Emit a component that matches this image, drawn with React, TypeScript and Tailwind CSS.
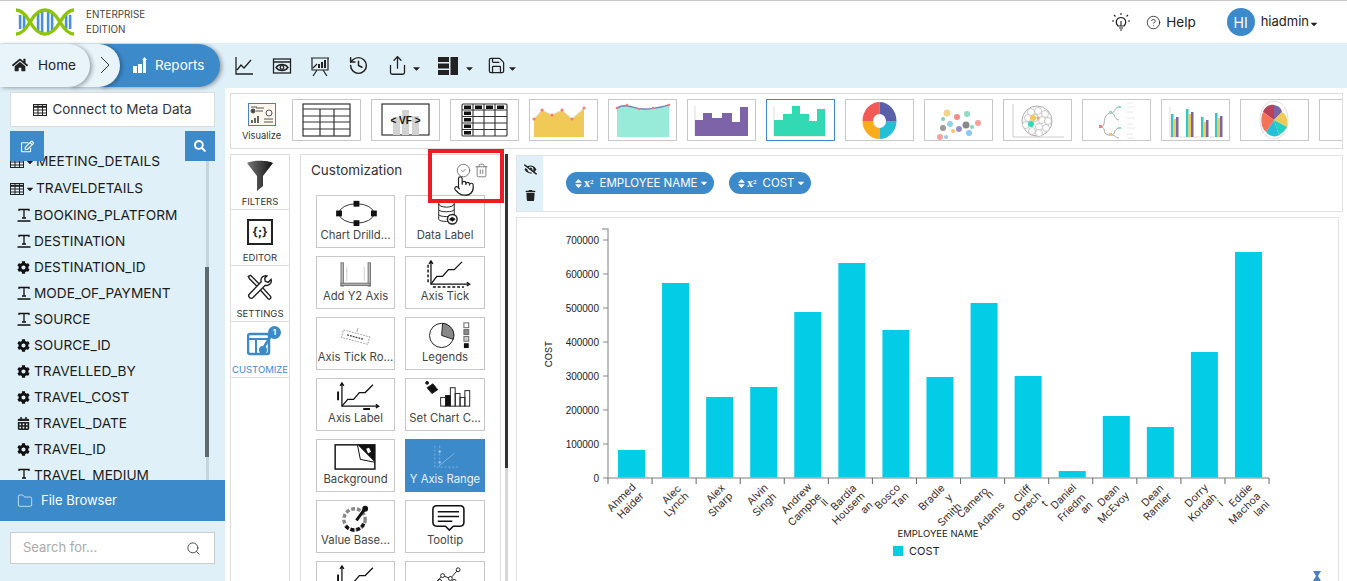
import { CircleCheck, Trash2, Search, Folder, History, Share, Save, CircleHelp, Pointer } from "lucide-react";
import { FaCog, FaCaretDown, FaSort, FaTrash, FaEyeSlash, FaCalendarAlt, FaHome, FaSearch, FaRegEdit } from "react-icons/fa";
import type { ReactNode } from "react";

const font = { fontFamily: "Inter, 'Open Sans', sans-serif" };

const fields: [string, string][] = [
  ["BOOKING_PLATFORM", "t"],
  ["DESTINATION", "t"],
  ["DESTINATION_ID", "c"],
  ["MODE_OF_PAYMENT", "t"],
  ["SOURCE", "t"],
  ["SOURCE_ID", "c"],
  ["TRAVELLED_BY", "c"],
  ["TRAVEL_COST", "c"],
  ["TRAVEL_DATE", "d"],
  ["TRAVEL_ID", "c"],
  ["TRAVEL_MEDIUM", "t"],
];

// bar tops in page pixels, the chart svg uses page coordinates
const bars = [450, 283, 397, 387, 312, 263, 330, 377, 303, 376, 471, 416, 427, 352, 252];

const labels: [string, number, number][] = [
  ["Ahmed", 622, 498], ["Haider", 631, 506],
  ["Alec", 672, 495], ["Lynch", 677, 505],
  ["Alex", 716, 494], ["Sharp", 721, 505],
  ["Alvin", 758, 495], ["Singh", 765, 505],
  ["Andrew", 797, 499], ["Campbe", 805, 510], ["ll", 825, 503],
  ["Bardia", 844, 498], ["Housem", 849, 509], ["an", 867, 508],
  ["Bosco", 888, 497], ["Tan", 901, 501],
  ["Bradle", 932, 498], ["y", 949, 498], ["Smith", 950, 515],
  ["Camero", 973, 503], ["n", 990, 495], ["Adams", 991, 516],
  ["Cliff", 1023, 494], ["Obrech", 1027, 507], ["t", 1045, 504],
  ["Daniel", 1064, 497], ["Friedm", 1072, 508], ["an", 1087, 508],
  ["Dean", 1109, 496], ["McEvoy", 1114, 508],
  ["Dean", 1153, 496], ["Ramler", 1158, 507],
  ["Dorry", 1197, 496], ["Kordah", 1203, 508], ["i", 1221, 504],
  ["Eddie", 1241, 496], ["Machoa", 1245, 509], ["lani", 1262, 509],
];

function Logo() {
  const rungs = [20, 24, 38, 42, 48, 52, 66, 70];
  return (
    <svg width="60" height="28" viewBox="15 7 60 28" fill="none">
      {rungs.map(x => {
        const h = x < 30 || x > 60 ? 7 : 10;
        return <rect key={x} x={x - 1.2} y={21 - h} width="2.6" height={h * 2} fill="#4a90e2" />;
      })}
      <path d="M16 9C22 9 26 14 30 21C34 28 39 33 45 33C51 33 56 28 60 21C64 14 68 9 74 9" stroke="#8cc408" strokeWidth="3.5" />
      <path d="M16 33C22 33 26 28 30 21C34 14 39 9 45 9C51 9 56 14 60 21C64 28 68 33 74 33" stroke="#8cc408" strokeWidth="3.5" />
    </svg>
  );
}

function Caret({ className = "" }: { className?: string }) {
  return <FaCaretDown size={11} className={className} />;
}

function Toolbar() {
  return (
    <div className="flex items-center ml-[14px] text-[#222]">
      <svg width="20" height="20" viewBox="0 0 20 20" fill="none" stroke="#222" strokeWidth="1.3" className="mr-[18px]">
        <path d="M2 1v17h17M3 14l4-5 3 3 7-8" />
      </svg>
      <svg width="20" height="20" viewBox="0 0 20 20" fill="none" stroke="#222" strokeWidth="1.3" className="mr-[18px]">
        <rect x="1.5" y="3" width="17" height="14" />
        <path d="M1.5 6h17M4 11.5c3-4 9-4 12 0c-3 4-9 4-12 0z" />
        <circle cx="10" cy="11.5" r="1.8" />
      </svg>
      <svg width="20" height="20" viewBox="0 0 20 20" fill="none" stroke="#222" strokeWidth="1.2" className="mr-[18px]">
        <path d="M2 2h16v12H2zM1 2h18M7 14l-4 6M13 14l4 6M3 12l4-4" />
        <path d="M9 12V8M12 12V6M15 12V4" strokeWidth="2" />
      </svg>
      <History size={21} strokeWidth={1.7} className="mr-[18px]" />
      <Share size={21} strokeWidth={1.5} />
      <Caret className="ml-[3px] mr-[16px] mt-[5px]" />
      <svg width="20" height="18" viewBox="0 0 20 18" fill="#222">
        <rect x="0" y="0" width="11" height="5" />
        <rect x="0" y="6.5" width="11" height="5" />
        <rect x="0" y="13" width="11" height="5" />
        <rect x="12.5" y="0" width="7.5" height="18" />
      </svg>
      <Caret className="ml-[6px] mr-[12px] mt-[5px]" />
      <Save size={19} strokeWidth={1.6} />
      <Caret className="ml-[1px] mt-[5px]" />
    </div>
  );
}

function FieldIcon({ kind }: { kind: string }) {
  if (kind === "c") return <FaCog size={13} className="text-[#111]" />;
  if (kind === "d") return <FaCalendarAlt size={13} className="text-[#222]" />;
  return (
    <svg width="14" height="14" viewBox="0 0 14 14" fill="none" stroke="#111" strokeWidth="1.3">
      <path d="M2 3V1.500h10V3M7 1.500V10M5 10h4M0.500 13h13" />
    </svg>
  );
}

function TableGlyph() {
  return (
    <svg width="14" height="12" viewBox="0 0 14 12" fill="none" stroke="#222" strokeWidth="1">
      <rect x="0.5" y="0.5" width="13" height="11" />
      <path d="M0.5 2.8h13" strokeWidth="2" />
      <path d="M0.5 6h13M0.5 9h13M5 0.5v11M9.5 0.5v11" />
    </svg>
  );
}

function Sidebar() {
  return (
    <aside className="w-[225px] shrink-0 bg-[#e0f0f9] flex flex-col relative">
      <div className="px-[10px] pt-[4px] shrink-0">
        <div className="h-[35px] bg-white border border-[#dcdcdc] flex items-center justify-center text-[13.5px] text-[#333] gap-[5px]">
          <TableGlyph />
          Connect to Meta Data
        </div>
      </div>
      <div className="absolute left-[10px] right-[10px] top-[43px] flex justify-between z-10">
        <div className="w-[34px] h-[30px] bg-[#3d8acb] flex items-center justify-center text-white">
          <FaRegEdit size={13} />
        </div>
        <div className="w-[30px] h-[30px] bg-[#3d8acb] flex items-center justify-center text-white">
          <FaSearch size={12} />
        </div>
      </div>
      <div className="flex-1 relative overflow-hidden text-[13.7px] text-[#1c1c1c]">
        <div className="absolute right-[16px] top-[34px] bottom-0 w-[3px] bg-[#c5d5dd]" />
        <div className="absolute right-[16px] top-[140px] h-[190px] w-[4px] bg-[#5f6a6e]" />
        <div className="pt-[22px]">
          <div className="h-[26px] flex items-center pl-[10px] gap-[1px] leading-none">
            <TableGlyph />
            <FaCaretDown size={10} />
            <span>MEETING_DETAILS</span>
          </div>
          <div className="h-[27px] flex items-center pl-[10px] gap-[1px]">
            <TableGlyph />
            <FaCaretDown size={10} />
            <span>TRAVELDETAILS</span>
          </div>
          {fields.map(([name, kind]) => (
            <div key={name} className="h-[26px] flex items-center pl-[17px]">
              <span className="w-[17px] flex"><FieldIcon kind={kind} /></span>
              {name}
            </div>
          ))}
        </div>
      </div>
      <div className="h-[41px] shrink-0 bg-[#3d8acb] text-white text-[13px] flex items-center pl-[17px] gap-[8px]">
        <Folder size={16} strokeWidth={1} />
        File Browser
      </div>
      <div className="px-[10px] pt-[11px] pb-[17px] shrink-0">
        <div className="h-[32px] bg-white border border-[#ccc] flex items-center justify-between pl-[12px] pr-[13px] text-[13px] text-[#aaa]">
          Search for...
          <Search size={15} strokeWidth={1.5} className="text-[#444]" />
        </div>
      </div>
    </aside>
  );
}

function Thumb({ children, active }: { children: ReactNode; active?: boolean }) {
  return (
    <div className={`w-[69px] h-[42px] shrink-0 bg-white border ${active ? "border-[#3d8acb]" : "border-[#c8c8c8]"}`}>
      <svg width="67" height="40" viewBox="0 0 67 40">{children}</svg>
    </div>
  );
}

function ChartTypes() {
  return (
    <div className="flex gap-[10px] pt-[5px] overflow-hidden flex-1">
      <Thumb>
        <g fill="none" stroke="#333" strokeWidth="1.2">
          <rect x="10" y="4" width="47" height="32" />
          <path d="M10 9h47M10 16h47M10 22h47M10 29h47M27 9v27M41 9v27" />
        </g>
      </Thumb>
      <Thumb>
        <rect x="10" y="4" width="47" height="31" fill="none" stroke="#333" strokeWidth="1.2" />
        <rect x="21" y="17" width="7" height="18" fill="#d2d2d2" />
        <rect x="30" y="10" width="7" height="25" fill="#d2d2d2" />
        <rect x="40" y="16" width="7" height="19" fill="#d2d2d2" />
        <text x="33.5" y="23.5" textAnchor="middle" fontSize="10" fontWeight="700" fill="#111" style={{ fontFamily: "'Liberation Sans', sans-serif" }}>{"< VF >"}</text>
      </Thumb>
      <Thumb>
        <g fill="none" stroke="#333" strokeWidth="1.1">
          <rect x="11" y="4" width="45" height="32" rx="1" />
          <path d="M11 10h45M11 16.500h45M11 23h45M11 29.500h45M22 4v32M33 4v32M44 4v32" />
        </g>
        {[13, 24, 35, 46].map(x => <rect key={x} x={x} y="5.500" width="7" height="3.500" fill="#111" />)}
        {[11.5, 18, 24.5, 31].map(y => <rect key={y} x="13" y={y} width="7" height="3.500" fill="#111" />)}
      </Thumb>
      <Thumb>
        <path d="M4 19L12 10L22 15L32 10L42 19L54 8V37H4Z" fill="#f0c956" />
        <path d="M4 19L12 10L22 15L32 10L42 19L54 8" fill="none" stroke="#ddd" strokeWidth="1" />
        {[[4, 19], [12, 10], [22, 15], [32, 10], [42, 19], [54, 8]].map(([x, y]) => <circle key={x} cx={x} cy={y} r="1.500" fill="#f77" />)}
      </Thumb>
      <Thumb>
        <path d="M8 8C18 2 26 10 36 9C46 9 52 7 60 5V37H8Z" fill="#98ebd9" />
        <path d="M8 8C18 2 26 10 36 9C46 9 52 7 60 5" fill="none" stroke="#7d7fb8" strokeWidth="1.500" />
        {[[8, 8], [18, 5], [30, 9], [44, 8], [60, 5]].map(([x, y]) => <circle key={x} cx={x} cy={y} r="1.300" fill="#f77" />)}
      </Thumb>
      <Thumb>
        <path d="M7 6V36" stroke="#ddd" />
        <path d="M7 36V20H15V13H24V18H34V13H44V22H52V7H60V36Z" fill="#7d64a8" />
      </Thumb>
      <Thumb active>
        <path d="M7 6V36H60" fill="none" stroke="#ddd" />
        <path d="M7 36V20H16V14H25V6H33V14H42V21H50V9H58V36Z" fill="#33d9b2" />
      </Thumb>
      <Thumb>
        <path d="M33.500 2A17 19 0 0 0 16.500 21H27A6.500 7 0 0 1 33.500 14Z" fill="#f25a55" />
        <path d="M33.500 2A17 19 0 0 1 50.500 21H40A6.500 7 0 0 0 33.500 14Z" fill="#5a5fa8" />
        <path d="M16.500 21A17 18 0 0 0 33.500 39V28A6.500 7 0 0 1 27 21Z" fill="#fbab1b" />
        <path d="M50.500 21A17 18 0 0 1 33.500 39V28A6.500 7 0 0 0 40 21Z" fill="#25bfd5" />
      </Thumb>
      <Thumb>
        {[[22, 13, 3.5, "#f3d58a"], [42, 14, 3, "#8fdcc0"], [32, 17, 3, "#f98b86"], [18, 19, 2, "#7fd6c0"], [25, 24, 3, "#8fd3e8"], [41, 25, 3.500, "#888"], [53, 23, 3, "#f9a09a"], [47, 27, 2, "#7fd6c0"], [18, 28, 3, "#999"], [28, 31, 2, "#f3c56a"], [34, 29, 3, "#9a90c8"], [44, 33, 3, "#8cc8f5"], [15, 37, 3, "#f9a09a"], [21, 37, 2, "#9cc8f0"]].map(([x, y, r, c], i) => (
          <circle key={i} cx={x as number} cy={y as number} r={r as number} fill={c as string} />
        ))}
      </Thumb>
      <Thumb>
        <path d="M9 4V37H60" fill="none" stroke="#ccc" />
        <circle cx="33" cy="21" r="15" fill="#fff" stroke="#aaa" />
        {[[27, 12], [34, 11], [41, 14], [24, 18], [31, 18], [38, 20], [44, 21], [22, 25], [35, 27], [42, 28], [28, 31], [35, 33]].map(([x, y]) => (
          <circle key={`${x}-${y}`} cx={x} cy={y} r="3.500" fill="#fff" stroke="#bbb" strokeWidth="0.8" />
        ))}
        <circle cx="29" cy="18" r="3" fill="#f0c956" />
        <circle cx="27" cy="24" r="3" fill="#33d9b2" />
        <circle cx="34" cy="18" r="1.500" fill="#f0a060" />
      </Thumb>
      <Thumb>
        <g fill="none" stroke="#aaa" strokeWidth="1">
          <path d="M18 27C24 27 18 14 28 13M18 27C24 27 18 36 28 35M28 13C33 13 30 8 36 7M28 13C33 13 30 19 36 20M28 35C33 35 30 29 36 28M28 35C33 35 32 38 36 38" />
        </g>
        <path d="M44 3H50M44 7H52M44 12H50M44 18H52M44 24H50M44 28H52M44 34H50M44 38H52" stroke="#e8e8e8" />
        <rect x="16" y="25" width="3" height="3" fill="#f77" />
        <rect x="26" y="11" width="3" height="3" fill="#8fdcc0" />
        <rect x="26" y="33" width="3" height="3" fill="#f0c956" />
        <rect x="35" y="6" width="3" height="2" fill="#8fdcc0" />
        <rect x="35" y="27" width="3" height="2" fill="#8fdcc0" />
      </Thumb>
      <Thumb>
        <path d="M8 7V37H60" fill="none" stroke="#ddd" />
        {[[9, 14], [24, 9], [39, 17], [53, 13]].map(([x, y]) => (
          <g key={x}>
            <rect x={x} y={y} width="2.500" height={37 - y} fill="#33c9c0" />
            <rect x={x + 2.5} y={y + 5} width="2.500" height={32 - y} fill="#f0c956" />
            <rect x={x + 5} y={y + 3} width="2.500" height={34 - y} fill="#7d64a8" />
          </g>
        ))}
      </Thumb>
      <Thumb>
        <ellipse cx="33" cy="20" rx="14" ry="19" fill="#fff" stroke="#ddd" />
        <path d="M33 20L22 12C24 6 30 4 33 5Z" fill="#b84258" />
        <path d="M33 20V5C38 6 40 8 41 12Z" fill="#7d64a8" />
        <path d="M33 20L41 12C45 14 47 19 46 27Z" fill="#f0c956" />
        <path d="M33 20L46 27C44 30 42 33 38 35Z" fill="#25cfc0" />
        <path d="M33 20L38 35C34 38 28 36 25 32Z" fill="#25bfd5" />
        <path d="M33 20L25 32C20 28 19 20 22 12Z" fill="#f77058" />
      </Thumb>
      <Thumb>{null}</Thumb>
    </div>
  );
}

function SideTab({ label, children, active }: { label: string; children: ReactNode; active?: boolean }) {
  return (
    <div className={`h-[56px] first:-mt-[1px] border-b border-[#ddd] flex flex-col items-center relative ${active ? "text-[#3d8acb]" : "text-[#333]"}`}>
      <div className="h-[42px] flex items-center justify-center">{children}</div>
      <span className="text-[9.5px] leading-[12px] whitespace-nowrap">{label}</span>
    </div>
  );
}

function Tabs() {
  return (
    <div className="w-[60px] shrink-0 bg-white border border-[#ddd] border-b-0 h-[500px]">
      <SideTab label="FILTERS">
        <svg width="28" height="32" viewBox="0 0 28 32" className="mt-[2px]">
          <defs>
            <linearGradient id="fn" x1="0" y1="0" x2="1" y2="0">
              <stop offset="0" stopColor="#777" />
              <stop offset="1" stopColor="#111" />
            </linearGradient>
          </defs>
          <path d="M1 3C6 0 22 0 27 3L17 16V26L11 31V16Z" fill="url(#fn)" />
        </svg>
      </SideTab>
      <SideTab label="EDITOR">
        <div className="w-[26px] h-[26px] mt-[2px] border-[2px] border-[#222] flex items-center justify-center text-[12px] font-bold text-[#222]">{"{;}"}</div>
      </SideTab>
      <SideTab label="SETTINGS">
        <svg width="28" height="28" viewBox="0 0 24 24" fill="none" stroke="#222" strokeWidth="1.200">
          <path d="M2 3L4 2L12 10L21 20C22 22 20 23 19 22L10 12L3 5Z" />
          <path d="M18 2.500a4 4 0 0 0-5 5L3 18a2.100 2.100 0 0 0 3 3L16.500 10.500a4 4 0 0 0 5-5l-2.500 2.500-2.500-1-.5-2.500z" fill="#fff" />
        </svg>
      </SideTab>
      <SideTab label="CUSTOMIZE" active>
        <div className="relative mt-[1px]">
          <svg width="26" height="26" viewBox="0 0 26 26" fill="none">
            <rect x="1" y="3" width="21" height="20" rx="2" stroke="#3d8acb" strokeWidth="2.500" />
            <path d="M1 8h21M9 8v15" stroke="#3d8acb" strokeWidth="2" />
            <circle cx="16" cy="19" r="4" fill="#3d8acb" />
            <path d="M17 16L25 3" stroke="#3d8acb" strokeWidth="2.500" />
          </svg>
          <span className="absolute -top-[5px] -right-[8px] w-[13px] h-[13px] rounded-full bg-[#3d8acb] text-white text-[8px] leading-[13px] text-center font-bold">1</span>
        </div>
      </SideTab>
    </div>
  );
}

const black = "#111";

// the last two cards run off the page before their labels, so they have none
const cards: { label?: string; active?: boolean; icon: ReactNode }[] = [
  { label: "Chart Drilld...", icon: (
    <g>
      <ellipse cx="40" cy="18" rx="18" ry="10" fill="none" stroke="#333" />
      {[[22, 18], [40, 8], [58, 18], [40, 28]].map(([x, y]) => <rect key={x * y} x={x - 3} y={y - 3} width="6" height="6" fill={black} />)}
    </g>
  ) },
  { label: "Data Label", icon: (
    <g fill="none" stroke="#222">
      <ellipse cx="40" cy="8" rx="8" ry="3.500" />
      <path d="M32 8V24C32 27 48 27 48 24V8M32 14C32 17 48 17 48 14M32 19C32 22 48 22 48 19" />
      <circle cx="46" cy="24" r="5" fill="#fff" strokeWidth="1.500" />
      <path d="M43 24l3-2 3 2-3 2z" fill={black} />
    </g>
  ) },
  { label: "Add Y2 Axis", icon: (
    <g fill="none" stroke="#777">
      <rect x="24" y="6" width="2.500" height="24" fill="#bbb" />
      <rect x="52" y="6" width="2.500" height="24" fill="#bbb" />
      <rect x="24" y="27" width="30" height="2.500" fill="#aaa" />
      <path d="M30 10v15M48 10v15" stroke="#ccc" />
    </g>
  ) },
  { label: "Axis Tick", icon: (
    <g fill="none" stroke={black} strokeWidth="1.300">
      <path d="M24 4V28H62M61 26l3 2-3 2M22 7l2-3 2 3" />
      <path d="M24 28L30 20H36L42 13H48L56 5" />
      <path d="M21 8V28M26 31H58" strokeDasharray="3 2" strokeWidth="1.500" />
    </g>
  ) },
  { label: "Axis Tick Ro...", icon: (
    <g transform="rotate(15 40 20)">
      <rect x="25" y="16" width="28" height="8" fill="#fff" stroke="#999" strokeDasharray="2 1" />
      <path d="M30 20H48" stroke="#444" strokeWidth="1.500" strokeDasharray="2 1" />
      <path d="M39 10V15" stroke="#aaa" />
    </g>
  ) },
  { label: "Legends", icon: (
    <g>
      <circle cx="35" cy="18" r="12.500" fill="#fff" stroke="#222" />
      <path d="M35 18L36 5.500A12.500 12.500 0 0 1 47 22Z" fill="#888" stroke="#222" />
      <rect x="58" y="5" width="5" height="5" fill="#fff" stroke="#666" />
      <rect x="58" y="12" width="5" height="5" fill="#888" stroke="#666" />
      <rect x="58" y="19" width="5" height="5" fill="#ccc" stroke="#666" />
      <rect x="58" y="26" width="5" height="5" fill={black} />
    </g>
  ) },
  { label: "Axis Label", icon: (
    <g fill="none" stroke={black} strokeWidth="1.300">
      <path d="M25 4V28H62M60 26l3 2-3 2M23 7l2-3 2 3" />
      <path d="M25 28L31 21H37L43 14H49L57 6" />
      <path d="M21 13V22M47 31H54" strokeWidth="2" />
    </g>
  ) },
  { label: "Set Chart C...", icon: (
    <g fill="none" stroke="#222">
      <path d="M20 9L26 5L31 11L25 15Z" fill={black} />
      <circle cx="20" cy="4" r="1.500" fill={black} />
      <rect x="34" y="19" width="5" height="9" />
      <rect x="39" y="17" width="5" height="11" fill={black} />
      <rect x="44" y="9" width="5" height="19" />
      <rect x="49" y="15" width="5" height="13" />
      <rect x="54" y="19" width="5" height="9" />
      <rect x="59" y="12" width="5" height="16" />
    </g>
  ) },
  { label: "Background", icon: (
    <g>
      <rect x="18" y="5" width="41" height="25" fill="#fff" stroke={black} strokeWidth="1.500" />
      <path d="M41 5L44 20L59 23V5Z" fill={black} />
      <path d="M41 5L44 20L59 23" fill="#fff" stroke={black} />
      <path d="M50 9L53 8L55 12L52 14Z" fill="#fff" />
    </g>
  ) },
  { label: "Y Axis Range", active: true, icon: (
    <g fill="none" stroke="#7fb3e0">
      <path d="M28 6V28H52M33 6V28" strokeDasharray="2 2" />
      <path d="M33 26L48 14" />
      <circle cx="33" cy="12" r="1" fill="#cfe4f5" />
      <circle cx="33" cy="23" r="1" fill="#cfe4f5" />
    </g>
  ) },
  { label: "Value Base...", icon: (
    <g fill="none">
      <circle cx="38" cy="19" r="11" stroke="#888" strokeWidth="3.500" strokeDasharray="4 2" />
      <path d="M29 26A11 11 0 0 0 48 22" stroke={black} strokeWidth="3.500" strokeDasharray="4 2" />
      <path d="M40 20L48 9" stroke={black} strokeWidth="3" />
      <circle cx="49" cy="8" r="3" fill={black} />
    </g>
  ) },
  { label: "Tooltip", icon: (
    <g fill="none" stroke={black} strokeWidth="1.600">
      <path d="M30 5H54Q58 5 58 9V22Q58 26 54 26H47L43 30L39 26H30Q26 26 26 22V9Q26 5 30 5Z" />
      <path d="M31 11H53M31 16H53M31 21H46" />
    </g>
  ) },
  { icon: (
    <g fill="none" stroke={black} strokeWidth="1.300">
      <path d="M25 4V28H62M23 7l2-3 2 3" />
      <path d="M25 28L31 21H37L43 14H49L57 6" />
      <path d="M21 13V22" strokeWidth="2" />
    </g>
  ) },
  { icon: (
    <g fill="none" stroke="#222">
      <path d="M28 22L36 14L44 17L52 8" />
      {[[28, 22], [36, 14], [44, 17], [52, 8], [33, 20], [48, 20]].map(([x, y]) => <circle key={x} cx={x} cy={y} r="2" fill="#fff" />)}
    </g>
  ) },
];

function Customization() {
  return (
    <div className="w-[201px] h-[500px] shrink-0 ml-[10px] border border-[#ddd] border-b-0 bg-white overflow-hidden">
      <div className="h-[40px] pl-[10px] pt-[5px] text-[13.5px] text-[#333]">Customization</div>
      <div className="grid grid-cols-[79px_80px] gap-x-[10px] gap-y-[8px] pl-[15px]">
        {cards.map((c, i) => (
          <div key={i} className={`h-[53px] border flex flex-col items-center ${c.active ? "bg-[#3d8acb] border-[#3d8acb] text-[#e8f2fa]" : "bg-white border-[#c8c8c8] text-[#444]"}`}>
            <svg width="77" height="31" viewBox="0 0 78 32" className="shrink-0">{c.icon}</svg>
            {c.label && <span className="text-[11.3px] leading-[16px] whitespace-nowrap">{c.label}</span>}
          </div>
        ))}
      </div>
    </div>
  );
}

function Pill({ text, width }: { text: string; width: string }) {
  return (
    <div className={`h-[22px] ${width} rounded-full bg-[#3d8acb] text-white flex items-center pl-[7px] pt-[2px] text-[11.5px] whitespace-nowrap`}>
      <FaSort size={11} className="-mt-[2px]" />
      <span className="font-bold text-[12px] mr-[6px] -mt-[2px] leading-none" style={{ fontFamily: "'Liberation Serif', serif" }}>x<sup className="text-[7px]">2</sup></span>
      {text}
      <FaCaretDown size={10} className="ml-[1px] -mt-[2px]" />
    </div>
  );
}

function BarChart() {
  const ticks = Array.from({ length: 16 }, (_, i) => 608 + i * 44.07);
  return (
    <svg width="822" height="364" viewBox="517 218 822 364" className="block" style={{ fontFamily: "Inter, sans-serif" }}>
      <path d="M602 229H608V478H1269" fill="none" stroke="#aaa" strokeWidth="1.500" />
      {[0, 1, 2, 3, 4, 5, 6, 7].map(i => {
        const y = 478 - i * 34;
        return (
          <g key={i}>
            <path d={`M603 ${y}H608`} stroke="#888" />
            <text x="599" y={y + 3.5} textAnchor="end" fontSize="10" fill="#222" style={{ fontFamily: "'Liberation Sans', sans-serif" }}>{i * 100000}</text>
          </g>
        );
      })}
      {bars.map((top, i) => (
        <rect key={i} x={618 + i * 44.07} y={top} width="27" height={477.5 - top} fill="#03cce6" />
      ))}
      {ticks.map(x => <path key={x} d={`M${x} 478V484`} stroke="#666" />)}
      {labels.map(([t, x, y], i) => (
        <text key={i} x={x} y={y} transform={`rotate(-45 ${x} ${y})`} textAnchor="middle" dominantBaseline="middle" fontSize="10.5" fill="#3a2a2a">{t}</text>
      ))}
      <text x="549" y="354" transform="rotate(-90 549 354)" textAnchor="middle" dominantBaseline="middle" fontSize="9.5" fill="#222">COST</text>
      <text x="938" y="534" textAnchor="middle" dominantBaseline="middle" fontSize="9.5" fill="#222">EMPLOYEE NAME</text>
      <rect x="893" y="546" width="10" height="10" fill="#03cce6" />
      <text x="909" y="552" dominantBaseline="middle" fontSize="11" fill="#222">COST</text>
      <path d="M1313 571H1321L1318 576L1321 581H1313L1316 576Z" fill="#4a7fc0" />
    </svg>
  );
}

export default function App() {
  return (
    <div className="w-[1347px] h-[581px] overflow-hidden relative bg-white" style={font}>
      <header className="h-[43px] border-t border-[#c8c8c8] flex items-center text-[#222]">
        <div className="ml-[15px]"><Logo /></div>
        <div className="ml-[11px] text-[9.8px] leading-[15px] text-[#444]">
          <div>ENTERPRISE</div>
          <div>EDITION</div>
        </div>
        <div className="ml-auto flex items-center">
          <svg width="20" height="20" viewBox="0 0 20 20" fill="none" stroke="#222" strokeWidth="1.100">
            <path d="M7 14C5 12 5 10 5.500 8.500C7 4.500 13 4.500 14.500 8.500C15 10 15 12 13 14ZM8 16H12M9 18H11M10 14V9" />
            <path d="M10 1V3M3 3L4.500 4.500M17 3L15.500 4.500M1 9H3M17 9H19" />
          </svg>
          <CircleHelp size={15} strokeWidth={1.3} className="ml-[15px]" />
          <span className="ml-[5px] text-[13.5px]">Help</span>
          <div className="ml-[31px] w-[28px] h-[28px] rounded-full bg-[#3d8acb] text-white text-[14px] flex items-center justify-center">HI</div>
          <span className="ml-[6px] text-[13px]">hiadmin</span>
          <FaCaretDown size={10} className="mr-[28px] mt-[3px]" />
        </div>
      </header>
      <div className="h-[45px] bg-[#e0f0f9] flex items-center">
        <div className="flex h-[43px] -mt-[1px] text-[13.5px]">
          <div className="w-[90px] z-30 rounded-r-[22px] bg-[#e8f3fa] shadow-[2px_1px_4px_rgba(0,0,0,0.35)] flex items-center pl-[12px] gap-[10px] text-[#222]">
            <FaHome size={16} />
            Home
          </div>
          <div className="w-[50px] -ml-[20px] z-20 rounded-r-[22px] bg-[#e8f3fa] shadow-[2px_1px_4px_rgba(0,0,0,0.3)] flex items-center pl-[30px]">
            <svg width="10" height="18" viewBox="0 0 10 18" fill="none" stroke="#333"><path d="M1 1L9 9L1 17" /></svg>
          </div>
          <div className="w-[120px] -ml-[20px] z-10 rounded-r-[22px] bg-[#3d8acb] text-white shadow-[2px_1px_4px_rgba(0,0,0,0.35)] flex items-center pl-[33px] gap-[6px]">
            <svg width="16" height="16" viewBox="0 0 16 16" fill="#fff"><rect x="0" y="9" width="4" height="7" /><rect x="5" y="7" width="4" height="9" /><rect x="10" y="3" width="3" height="13" /><path d="M11.500 0L14 3H9Z" /></svg>
            Reports
          </div>
        </div>
        <Toolbar />
      </div>
      <div className="flex h-[493px]">
        <Sidebar />
        <main className="flex-1 min-w-0 pl-[5px] pr-[4px] pt-[5px]">
          <div className="h-[56px] border border-[#ddd] flex">
            <div className="w-[61px] shrink-0 flex flex-col items-center pt-[9px]">
              <svg width="28" height="23" viewBox="0 0 28 23" fill="none" stroke="#555">
                <rect x="0.500" y="0.500" width="27" height="22" stroke="#4a7fc0" fill="#fdf6ec" />
                <circle cx="5" cy="8" r="2" fill="#444" />
                <circle cx="21" cy="10" r="3" fill="#fff" />
                <path d="M8 5H16M8 8H15M3 4H9M16 16H25M16 19H25" />
                <path d="M4 20V17M7 20V15M10 20V13" strokeWidth="2" stroke="#666" />
              </svg>
              <span className="text-[9.3px] leading-[12px] mt-[4px] text-[#333]">Visualize</span>
            </div>
            <ChartTypes />
          </div>
          <div className="flex mt-[5px]">
            <Tabs />
            <Customization />
            <div className="relative w-[3px] h-[500px] ml-[4px] bg-[#d6d6d6] shrink-0">
              <div className="w-[3px] h-[314px] bg-[#333]" />
            </div>
            <div className="flex-1 min-w-0 ml-[8px] mt-[1px]">
              <div className="h-[57px] border border-[#e2e2e2] flex">
                <div className="w-[26px] bg-[#e0f0f9] flex flex-col items-center gap-[14px] pt-[7px] text-[#222]">
                  <FaEyeSlash size={13} />
                  <FaTrash size={11} />
                </div>
                <div className="flex gap-[15px] pl-[23px] pt-[16px]">
                  <Pill text="EMPLOYEE NAME" width="w-[148px]" />
                  <Pill text="COST" width="w-[82px]" />
                </div>
              </div>
              <div className="mt-[5px] mr-[4px] border border-[#e2e2e2] border-b-0 h-[370px] overflow-hidden">
                <BarChart />
              </div>
            </div>
          </div>
        </main>
      </div>
      {/* annotation box and cursor sit on top of the panel */}
      <div className="absolute left-[428px] top-[149px] w-[76px] h-[54px] border-[4px] border-[#ed1c24]" />
      <CircleCheck size={15} strokeWidth={1.2} className="absolute left-[456px] top-[163px] text-[#555]" />
      <Trash2 size={15} strokeWidth={1.3} className="absolute left-[474px] top-[163px] text-[#666]" />
      <Pointer size={22} strokeWidth={1.3} className="absolute left-[453px] top-[175px] text-[#222] fill-white" />
    </div>
  );
}
